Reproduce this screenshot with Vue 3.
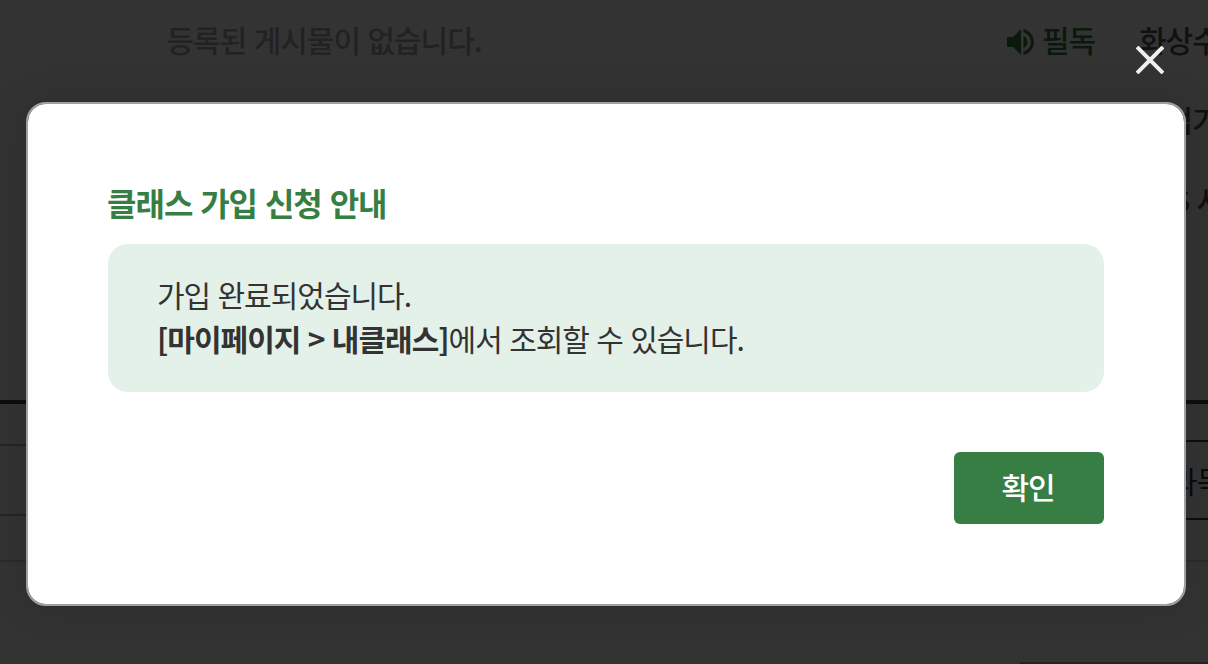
<script setup>
import { ref } from 'vue';

const isOpen = ref(true);

const notices = [
    { id: 1, badge: '필독', title: '화상수' },
    { id: 2, badge: '', title: '수업가' },
    { id: 3, badge: '', title: 'S 사' },
];

const closeModal = () => {
    isOpen.value = false;
};
</script>

<template>
    <div class="screen">
        <main class="page">
            <section class="boards">
                <div class="board-empty">등록된 게시물이 없습니다.</div>
                <ul class="notice-list">
                    <li v-for="notice in notices" :key="notice.id" class="notice">
                        <span class="notice-badge">
                            <template v-if="notice.badge">
                                <svg class="speaker" viewBox="0 0 28 26">
                                    <path d="M0 8h6l8-8v26l-8-8H0z" />
                                    <path d="M16.500 7c2.500 1 4 3.300 4 6s-1.500 5-4 6z" />
                                    <path d="M16.500 0c6 1.400 10.500 6.700 10.500 13s-4.500 11.600-10.500 13v-3.300c4.300-1.300 7.400-5.200 7.400-9.700S20.800 4.600 16.500 3.300z" />
                                </svg>
                                {{ notice.badge }}
                            </template>
                        </span>
                        <span :class="['notice-title', `notice-title-${notice.id}`]">{{ notice.title }}</span>
                    </li>
                </ul>
            </section>
            <section class="tables">
                <div class="table-left">
                    <div class="row row-head"></div>
                    <div class="row row-body"></div>
                    <div class="row row-foot"></div>
                </div>
                <div class="table-right">
                    <div class="cell-head"></div>
                    <div class="cell-button">과목</div>
                    <div class="cell-foot"></div>
                </div>
            </section>
            <footer class="page-footer"></footer>
        </main>

        <div v-if="isOpen" class="dim">
            <div class="modal">
                <button class="close" type="button" aria-label="닫기" @click="closeModal">
                    <svg viewBox="0 0 28 28">
                        <path d="M1 1l26 26M27 1L1 27" />
                    </svg>
                </button>
                <h2 class="modal-title">클래스 가입 신청 안내</h2>
                <div class="message">
                    <p>가입 완료되었습니다.</p>
                    <p><strong>[마이페이지 &gt; 내클래스]</strong>에서 조회할 수 있습니다.</p>
                </div>
                <div class="actions">
                    <button class="confirm" type="button" @click="closeModal">확인</button>
                </div>
            </div>
        </div>
    </div>
</template>

<style>
body {
    margin: 0;
    overflow: hidden;
}
</style>

<style scoped>
.screen {
    position: relative;
    width: 1208px;
    height: 664px;
    overflow: hidden;
    font-family: 'Noto Sans CJK KR', sans-serif;
    font-size: 30px;
    letter-spacing: -1px;
    word-spacing: 1.6px;
    color: #333;
}
.page {
    display: flex;
    flex-direction: column;
    height: 100%;
    background: #fff;
}
.boards {
    display: flex;
    height: 400px;
}
.board-empty {
    flex: none;
    width: 838px;
    box-sizing: border-box;
    padding-left: 166.500px;
    line-height: 78px;
    font-weight: 500;
    color: #aaa;
}
.notice-list {
    flex: 1;
    min-width: 0;
    margin: 0;
    padding: 0 0 0 169px;
    list-style: none;
}
.notice {
    display: flex;
    height: 80px;
    line-height: 78px;
    white-space: nowrap;
}
.notice-badge {
    display: flex;
    flex: none;
    align-items: center;
    gap: 7px;
    width: 132px;
    height: 78px;
    font-weight: 500;
    color: #377e44;
}
.speaker {
    width: 28px;
    height: 26px;
    margin-top: 6px;
    fill: #377e44;
}
.notice-title {
    font-weight: 500;
    color: #555;
}
.notice-title-3 {
    padding-left: 33px;
}
.tables {
    display: flex;
    justify-content: space-between;
    height: 162px;
    box-sizing: border-box;
    border-top: 4px solid #444;
    border-bottom: 2px solid #d8d8d8;
}
.table-left {
    width: 600px;
}
.row {
    box-sizing: border-box;
    border-bottom: 2px solid #bbb;
}
.row-head {
    height: 42px;
}
.row-body {
    height: 70px;
}
.row-foot {
    border: 0;
}
.table-right {
    width: 100px;
}
.cell-head {
    height: 36px;
}
.cell-button {
    height: 76px;
    padding-left: 62px;
    border-top: 2px solid #444;
    border-bottom: 2px solid #444;
    line-height: 76px;
    white-space: nowrap;
}
.page-footer {
    height: 2px;
    margin: 100px 0 0 1020px;
    background: #aaa;
}
.dim {
    position: absolute;
    inset: 0;
    padding: 102px 22px 58px 26px;
    background: rgba(0, 0, 0, 0.8);
}
.modal {
    position: relative;
    box-sizing: border-box;
    height: 504px;
    padding: 74px 80px 80px;
    border: 2px solid #a0a0a0;
    border-radius: 20px;
    background: #fff;
    background-clip: padding-box;
    box-shadow: 0 0 40px rgba(0, 0, 0, 0.15);
}
.close {
    position: absolute;
    top: -58px;
    right: 20px;
    width: 28px;
    height: 28px;
    padding: 0;
    border: 0;
    background: none;
}
.close svg {
    display: block;
    width: 28px;
    height: 28px;
    fill: none;
    stroke: #f0f0f0;
    stroke-width: 4;
}
.modal-title {
    margin: 0 0 18px -1px;
    font-size: 32px;
    font-weight: 700;
    line-height: 48px;
    color: #377e44;
}
.message {
    box-sizing: border-box;
    height: 148px;
    padding: 28px 49px;
    border-radius: 20px;
    background: #e4f1e8;
}
.message p {
    margin: 0;
    line-height: 44px;
}
.message strong {
    font-weight: 700;
}
.actions {
    display: flex;
    justify-content: flex-end;
    margin-top: 60px;
}
.confirm {
    width: 150px;
    height: 72px;
    padding: 0 2px 4px 0;
    border: 0;
    border-radius: 6px;
    background: #377e44;
    color: #fff;
    font: inherit;
    font-weight: 500;
    letter-spacing: -1px;
}
</style>
